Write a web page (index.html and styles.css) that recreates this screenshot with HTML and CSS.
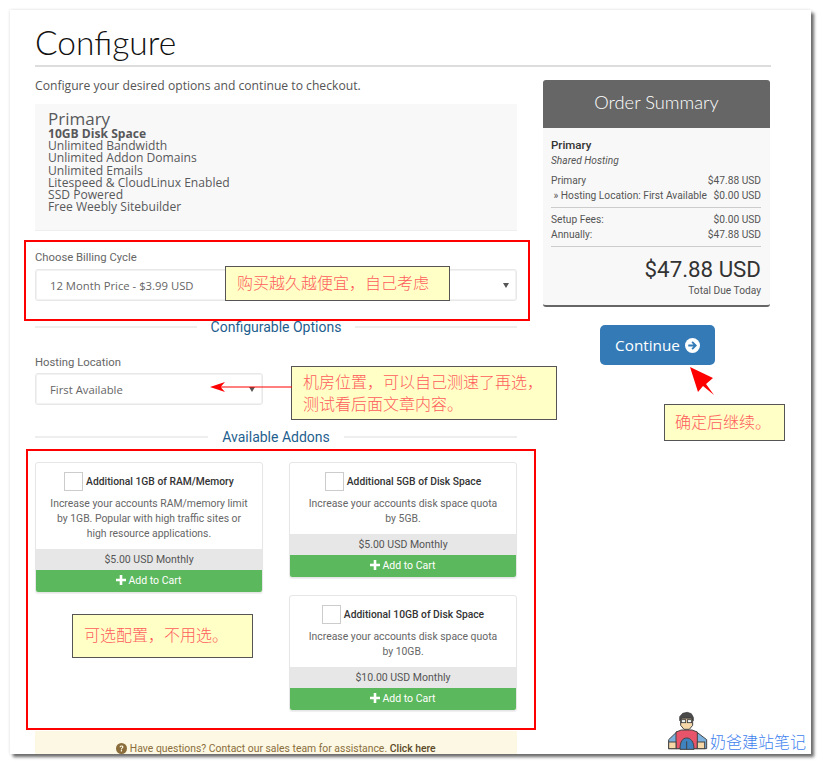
FILE: index.html
```html
<!DOCTYPE html>
<html lang="zh">
<head>
<meta charset="utf-8">
<title>Configure</title>
<link rel="stylesheet" href="styles.css">
</head>
<body>
<div class="sheet">
  <h1 class="title">Configure</h1>
  <div class="layout">
    <main class="main">
      <p class="intro">Configure your desired options and continue to checkout.</p>
      <section class="product">
        <div class="product-name">Primary</div>
        <strong>10GB Disk Space</strong><br>
        Unlimited Bandwidth<br>
        Unlimited Addon Domains<br>
        Unlimited Emails<br>
        Litespeed &amp; CloudLinux Enabled<br>
        SSD Powered<br>
        Free Weebly Sitebuilder
      </section>
      <div class="field billing">
        <div class="label">Choose Billing Cycle</div>
        <div class="select"><span>12 Month Price - $3.99 USD</span><i class="caret"></i></div>
      </div>
      <div class="divider options-head"><span>Configurable Options</span></div>
      <div class="field hosting">
        <div class="label">Hosting Location</div>
        <div class="select"><span>First Available</span><i class="caret"></i></div>
      </div>
      <div class="divider addons-head"><span>Available Addons</span></div>
      <div class="addons">
        <div class="addon-col">
          <article class="addon">
            <div class="addon-body">
              <div class="addon-title"><span class="check"></span><b>Additional 1GB of RAM/Memory</b></div>
              <p>Increase your accounts RAM/memory limit by 1GB. Popular with high traffic sites or high resource applications.</p>
            </div>
            <div class="price">$5.00 USD Monthly</div>
            <div class="cart"><svg class="plus" viewBox="0 0 10 10"><path d="M3.7 0h2.6v3.7H10v2.6H6.3V10H3.7V6.3H0V3.7h3.7z"/></svg>Add to Cart</div>
          </article>
        </div>
        <div class="addon-col">
          <article class="addon">
            <div class="addon-body">
              <div class="addon-title"><span class="check"></span><b>Additional 5GB of Disk Space</b></div>
              <p>Increase your accounts disk space quota by 5GB.</p>
            </div>
            <div class="price">$5.00 USD Monthly</div>
            <div class="cart"><svg class="plus" viewBox="0 0 10 10"><path d="M3.7 0h2.6v3.7H10v2.6H6.3V10H3.7V6.3H0V3.7h3.7z"/></svg>Add to Cart</div>
          </article>
          <article class="addon">
            <div class="addon-body">
              <div class="addon-title"><span class="check"></span><b>Additional 10GB of Disk Space</b></div>
              <p>Increase your accounts disk space quota by 10GB.</p>
            </div>
            <div class="price">$10.00 USD Monthly</div>
            <div class="cart"><svg class="plus" viewBox="0 0 10 10"><path d="M3.7 0h2.6v3.7H10v2.6H6.3V10H3.7V6.3H0V3.7h3.7z"/></svg>Add to Cart</div>
          </article>
        </div>
      </div>
      <div class="help">
        <svg class="help-icon" viewBox="0 0 16 16"><circle cx="8" cy="8" r="8"/><path class="help-q" d="M5.2 6.2C5.3 4.5 6.5 3.6 8.1 3.6c1.600 0 2.800 1 2.800 2.300 0 2-2.200 1.900-2.200 3.500H7c0-2.300 2-2.300 2-3.400 0-.5-.4-.9-1-.9-.7 0-1.100.4-1.200 1.100zM7 10.300h1.800v1.900H7z"/></svg>
        Have questions? Contact our sales team for assistance. <b>Click here</b>
      </div>
    </main>
    <aside class="side">
      <div class="summary">
        <h2 class="summary-head">Order Summary</h2>
        <div class="summary-body">
          <div class="summary-name">Primary</div>
          <div class="summary-group">Shared Hosting</div>
          <div class="row"><span>Primary</span><span>$47.88 USD</span></div>
          <div class="row"><span>&nbsp;» Hosting Location: First Available</span><span>$0.00 USD</span></div>
          <div class="rule"></div>
          <div class="row"><span>Setup Fees:</span><span>$0.00 USD</span></div>
          <div class="row"><span>Annually:</span><span>$47.88 USD</span></div>
          <div class="rule"></div>
          <div class="total">$47.88 USD</div>
          <div class="total-label">Total Due Today</div>
        </div>
      </div>
      <a class="continue">Continue <svg class="continue-icon" viewBox="0 0 16 16"><circle cx="8" cy="8" r="8"/><path class="arrow-cut" d="M8.300 3.500l4.500 4.500-4.500 4.500-1.400-1.400 2.100-2.100H3.500V7h5.500L6.900 4.900z"/></svg></a>
    </aside>
  </div>

  <div class="frame frame-billing"></div>
  <div class="frame frame-addons"></div>
  <div class="note note-billing">购买越久越便宜，自己考虑</div>
  <div class="note note-host">机房位置，可以自己测速了再选，<br>测试看后面文章内容。</div>
  <div class="note note-continue">确定后继续。</div>
  <div class="note note-addons">可选配置，不用选。</div>
  <svg class="pointer pointer-host" viewBox="0 0 82 12"><path d="M0 6l15-5-4 4.400h71v1.200H11l4 4.400z"/></svg>
  <svg class="pointer pointer-continue" viewBox="0 0 24 28"><path d="M0 0l23 11-7 6 8 11-11-9-5 6z"/></svg>
</div>
<div class="brand">
  <svg class="mascot" viewBox="0 0 138 144">
    <path d="M14 122V95l24-23h60l30 23v27z" fill="#7ab0dd" stroke="#444" stroke-width="3"/>
    <path d="M36 122V72l16-6h32l16 6v50z" fill="#e8556a" stroke="#444" stroke-width="3"/>
    <path d="M48 124c0-24 8-34 20-34s22 10 22 34z" fill="#3f82c0" stroke="#444" stroke-width="3"/>
    <path d="M68 100v24" stroke="#444" stroke-width="3"/>
    <rect x="14" y="102" width="22" height="20" fill="#f6d7a8" stroke="#444" stroke-width="3"/>
    <rect x="100" y="102" width="22" height="20" fill="#f6d7a8" stroke="#444" stroke-width="3"/>
    <path d="M50 30h36v22L76 64H60L50 52z" fill="#f6d7a8" stroke="#444" stroke-width="3"/>
    <path d="M47 38V26l9-10 14-3 12 4 6 11v10l-6-8H54z" fill="#4a4a4a" stroke="#333" stroke-width="2"/>
    <rect x="52" y="35" width="13" height="9" fill="#eef3f5" stroke="#333" stroke-width="2.500"/>
    <rect x="70" y="35" width="13" height="9" fill="#eef3f5" stroke="#333" stroke-width="2.500"/>
  </svg>
  <span>奶爸建站笔记</span>
</div>
</body>
</html>
```
FILE: styles.css
```css
* { box-sizing: border-box; }
html, body { margin: 0; height: 765px; overflow: hidden; background: #fff; }
body { position: relative; font-family: Roboto, "Liberation Sans", sans-serif; color: #58595b; }

.sheet {
  position: absolute;
  left: 10px; top: 10px;
  width: 801px; height: 744px;
  padding: 0 40px 0 25px;
  background: #fff;
  overflow: hidden;
}
body::before {
  content: "";
  position: absolute;
  left: 10px; top: 10px;
  width: 801px; height: 744px;
  box-shadow: 3px 3px 3px #6a6a6a, 0 0 3px #ddd;
}

.title {
  margin: 0;
  height: 57px;
  padding-top: 12px;
  border-bottom: 2px solid #ddd;
  font: 300 33.500px/40px Lato, sans-serif;
  color: #111;
}

.layout { display: grid; grid-template-columns: 482px 227px; column-gap: 26px; }

.intro { margin: 0; padding-top: 10px; height: 37px; font: 12.150px/17px "Open Sans", sans-serif; color: #555; }

.product {
  height: 127px;
  padding: 7px 13px 0;
  background: #f8f8f8;
  border-bottom: 1px solid #eee;
  font: 12.100px/12.200px "Open Sans", sans-serif;
  color: #58595b;
}
.product-name { font-size: 17px; line-height: 14px; padding-bottom: 2px; padding-top: 1px; }

.label { font-size: 11.300px; line-height: 14px; color: #666; }
.select {
  display: flex; align-items: center; justify-content: space-between;
  margin-top: 4px;
  padding: 0 7px 0 14px;
  height: 32px;
  border: 1px solid #e8e8e8;
  border-radius: 3px;
  font: 11.300px "Open Sans", sans-serif;
  color: #666;
  box-shadow: 0 0 0 1px #f2f2f2 inset;
}
.caret { border: 3px solid transparent; border-top: 5px solid #555; border-bottom: 0; width: 0; height: 0; }

.billing { padding-top: 20px; }
.hosting { width: 228px; padding-top: 21px; }
.hosting .select { margin-top: 3px; }

.divider { display: flex; align-items: center; gap: 14px; font-size: 14px; line-height: 16px; color: #1f5f8f; }
.divider::before, .divider::after { content: ""; flex: 1; border-top: 2px solid #eee; }
.options-head { margin-top: 18px; }
.addons-head { margin-top: 24px; }

.addons { display: grid; grid-template-columns: 228px 228px; column-gap: 26px; margin-top: 17px; height: 269px; }
.addon-col { display: flex; flex-direction: column; gap: 17px; }

.addon {
  display: flex; flex-direction: column;
  border: 1px solid #e6e6e6;
  border-radius: 3px;
  overflow: hidden;
  box-shadow: 0 1px 1px #eee;
}
.addon-body { padding: 9px 12px 8px; text-align: center; flex: 1; }
.addon-title { display: flex; align-items: center; justify-content: center; gap: 3px; font-size: 10.300px; color: #333; }
.addon-title b { font-weight: 500; }
.check { width: 19px; height: 19px; border: 1px solid #ccc; background: #fff; }
.addon p { margin: 5px 0 0; font-size: 10.400px; line-height: 15px; color: #666; }
.addon-col:last-child p { padding: 0 3px; }
.price { height: 21px; background: #e7e7e7; text-align: center; font-size: 10.500px; line-height: 21px; color: #555; }
.cart { height: 22px; background: #5cb85c; color: #fff; text-align: center; font-size: 10.500px; line-height: 21px; }
.plus { width: 10px; height: 10px; fill: #fff; margin-right: 2px; vertical-align: -1px; }

.help {
  height: 23px;
  padding-top: 12px;
  background: #fcf8e3;
  text-align: center;
  font-size: 10.400px;
  line-height: 11px;
  color: #8a6d3b;
}
.help b { color: #5c4a28; font-weight: 500; }
.help-icon { width: 11px; height: 11px; fill: #8a6d3b; vertical-align: -2px; }
.help-q { fill: #fcf8e3; }

.side { padding-top: 13px; display: flex; flex-direction: column; align-items: center; }
.summary {
  width: 227px;
  border-radius: 3px;
  background: #f8f8f8;
  border-bottom: 2px solid #666;
}
.summary-head {
  margin: 0;
  height: 48px;
  background: #666;
  border-radius: 3px 3px 0 0;
  text-align: center;
  color: #fff;
  font: 300 18.300px/45px Lato, sans-serif;
}
.summary-body { padding: 10px 9px 10px 8px; font-size: 10.200px; line-height: 14.500px; color: #555; height: 177px; }
.summary-name { font-size: 11.500px; font-weight: 500; line-height: 14px; color: #333; }
.summary-group { font-style: italic; margin-top: 2px; margin-bottom: 6px; line-height: 14px; }
.row { display: flex; justify-content: space-between; white-space: nowrap; }
.rule { border-top: 1px solid #ccc; margin: 4px 0 5px; }
.total { margin-top: 9px; text-align: right; font-size: 22.300px; line-height: 26px; color: #333; }
.total-label { margin-top: 2px; text-align: right; line-height: 14px; }

.continue {
  display: flex; align-items: center; justify-content: center; gap: 5px;
  margin-top: 18px;
  margin-left: 2px;
  width: 115px; height: 40px;
  background: #337ab7;
  border-radius: 5px;
  color: #fff;
  font: 15.300px "Open Sans", sans-serif;
}
.continue-icon { width: 15px; height: 15px; fill: #fff; }
.arrow-cut { fill: #337ab7; }

.frame { position: absolute; border: 2px solid #f00; }
.frame-billing { left: 14px; top: 230px; width: 506px; height: 81px; }
.frame-addons { left: 16px; top: 439px; width: 510px; height: 281px; }

.note {
  position: absolute;
  padding: 0 0 0 11px;
  background: #ffffc6;
  border: 1px solid #555;
  font: 300 16px/22px "Noto Sans CJK SC", sans-serif;
  color: #ff5c5c;
  white-space: nowrap;
}
.note-billing { left: 215px; top: 256px; width: 225px; height: 35px; padding-top: 4px; }
.note-host { left: 281px; top: 356px; width: 266px; height: 54px; padding-top: 3px; }
.note-continue { left: 654px; top: 394px; width: 121px; height: 37px; padding-top: 5px; padding-left: 10px; }
.note-addons { left: 62px; top: 604px; width: 181px; height: 44px; padding-top: 8px; }

.pointer { position: absolute; fill: #f00; }
.pointer-host { left: 200px; top: 371px; width: 82px; height: 12px; }
.pointer-continue { left: 680px; top: 357px; width: 24px; height: 28px; }

.brand { position: absolute; left: 664px; top: 708px; display: flex; align-items: flex-end; }
.mascot { width: 46px; height: 48px; }
.brand span { margin-bottom: 5px; font: 300 16px/20px "Noto Sans CJK SC", sans-serif; color: #3f83ee; }
```
